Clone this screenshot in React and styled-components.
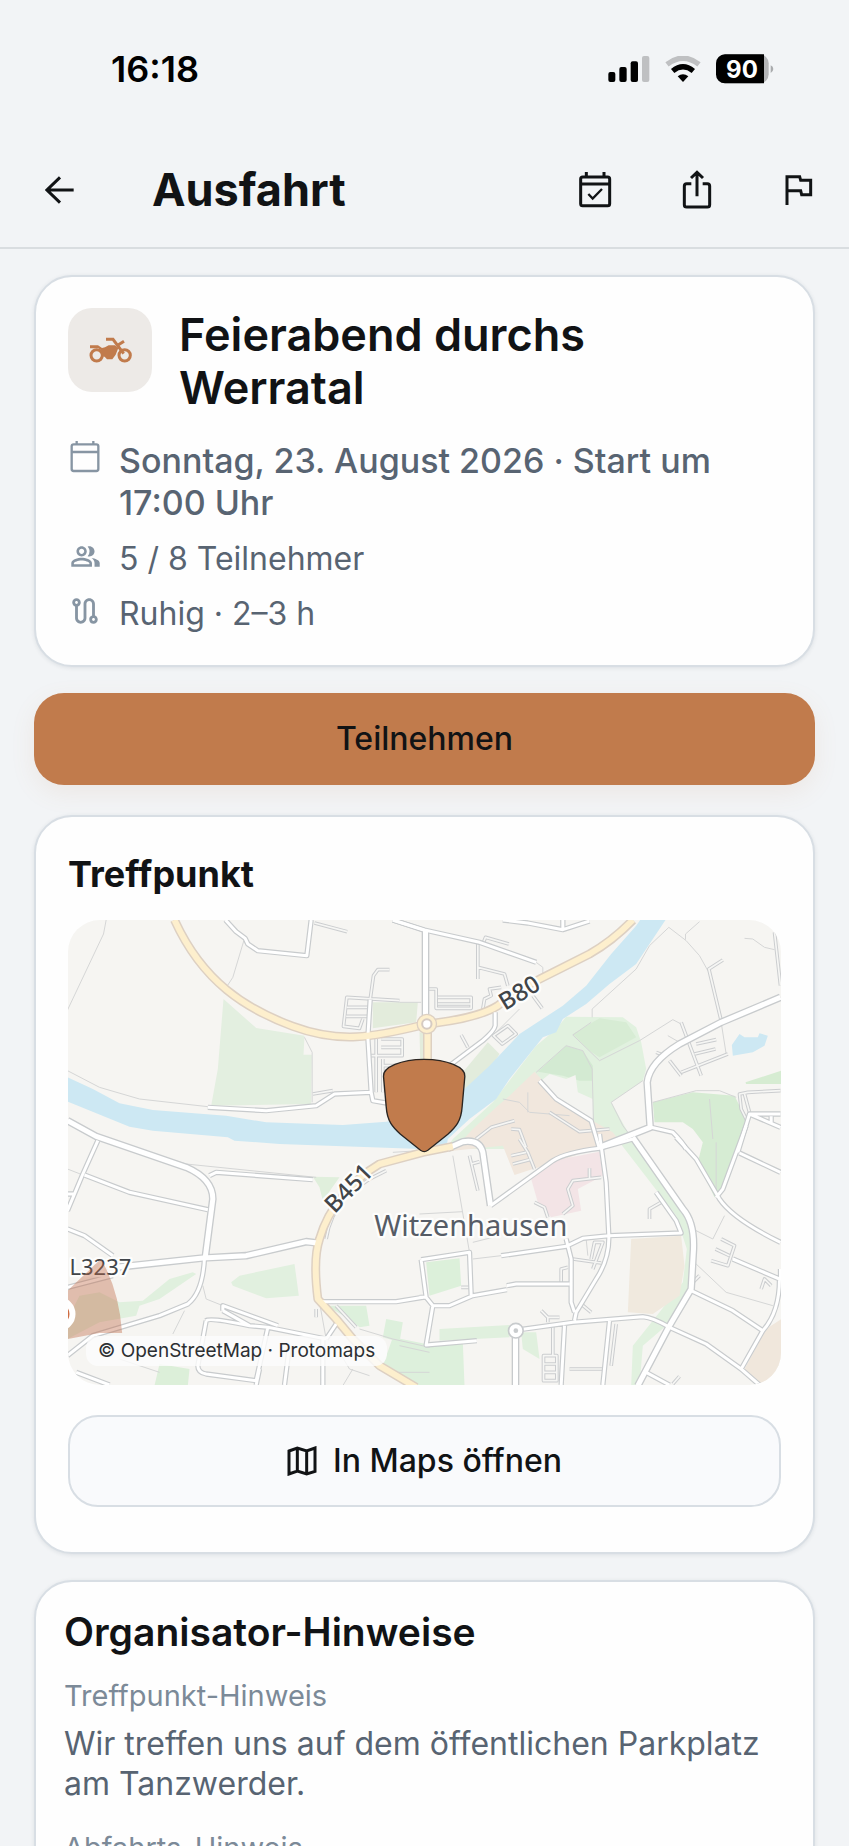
import React from "react";
import styled, { createGlobalStyle } from "styled-components";
import { MdOutlinePeopleAlt, MdOutlineRoute } from "react-icons/md";

const GlobalStyle = createGlobalStyle`
  *, *::before, *::after { box-sizing: border-box; }
  body {
    margin: 0;
    background: #f2f4f6;
    color: #111315;
    font-family: Inter, "Liberation Sans", sans-serif;
  }
  h1, h2, h3, p, ul { margin: 0; padding: 0; }
  button { font: inherit; color: inherit; cursor: pointer; }
  svg { display: block; flex: none; }
`;

/* ---------- Layout ---------- */

const Screen = styled.div`
  display: flex;
  flex-direction: column;
  height: 100vh;
  overflow: hidden;
`;

const StatusBar = styled.div`
  display: flex;
  flex: none;
  align-items: center;
  justify-content: space-between;
  height: 132px;
  padding: 6px 75px 0 111px;
  color: #000;
`;

const Clock = styled.time`
  font-size: 36px;
  font-weight: 600;
  line-height: 40px;
`;

const StatusIcons = styled.div`
  display: flex;
  align-items: center;
  gap: 15px;
`;

const Header = styled.header`
  display: flex;
  flex: none;
  align-items: center;
  height: 117px;
  padding: 0 26px 0 36px;
  border-bottom: 2px solid #d9dde0;
`;

const IconButton = styled.button`
  display: grid;
  place-items: center;
  width: 48px;
  height: 48px;
  padding: 0;
  border: 0;
  background: none;
`;

const PageTitle = styled.h1`
  flex: 1;
  margin-left: 68px;
  font-size: 45px;
  font-weight: 700;
  line-height: 56px;
`;

const Actions = styled.div`
  display: flex;
  gap: 54px;
`;

const Content = styled.main`
  display: flex;
  flex: 1;
  flex-direction: column;
  gap: 26px;
  min-height: 0;
  padding: 26px 34px;
  overflow-y: auto;
  scrollbar-width: none;
`;

const Card = styled.section`
  flex: none;
  padding: ${(p) => p.$pad};
  border: 2px solid #d8dee4;
  border-radius: 38px;
  background: #fefefe;
  box-shadow: 0 1px 4px rgba(30, 50, 70, 0.1);
`;

/* ---------- Ride summary ---------- */

const Summary = styled.div`
  display: flex;
  gap: 27px;
`;

const RideBadge = styled.div`
  display: grid;
  flex: none;
  place-items: center;
  width: 84px;
  height: 84px;
  border-radius: 24px;
  background: #edeae7;
`;

const RideTitle = styled.h2`
  font-size: 45px;
  font-weight: 600;
  line-height: 53px;
`;

const Facts = styled.ul`
  display: flex;
  flex-direction: column;
  gap: 15px;
  margin-top: 26px;
  list-style: none;
`;

const Fact = styled.li`
  display: flex;
  gap: 17px;
  color: #586472;
  font-size: ${(p) => (p.$lead ? 34 : 32)}px;
  font-weight: ${(p) => (p.$lead ? 500 : 400)};
  line-height: ${(p) => (p.$lead ? 42 : 40)}px;
`;

const FactIcon = styled.span`
  display: grid;
  flex: none;
  place-items: center;
  width: 34px;
  height: 34px;
  color: #8795a3;
`;

/* ---------- Buttons ---------- */

const Button = styled.button`
  display: flex;
  flex: none;
  align-items: center;
  justify-content: center;
  gap: 16px;
  width: 100%;
  height: 92px;
  border: 0;
  border-radius: 30px;
  font-size: 32px;
  font-weight: 500;
  line-height: 40px;
`;

const PrimaryButton = styled(Button)`
  margin-bottom: 4px;
  background: #c17b4c;
  box-shadow: 0 8px 24px rgba(193, 123, 76, 0.1);
`;

const OutlineButton = styled(Button)`
  border: 2px solid #d8dee4;
  background: #f9fafc;
`;

/* ---------- Meeting point ---------- */

const MeetingTitle = styled.h2`
  margin-bottom: 22px;
  font-size: 36px;
  font-weight: 700;
  line-height: 48px;
`;

const MapFrame = styled.div`
  position: relative;
  height: 465px;
  margin-bottom: 30px;
  border-radius: 32px;
  background: #f6f5f2;
  overflow: hidden;

  > svg {
    width: 100%;
    height: 100%;
  }
`;

const Attribution = styled.small`
  position: absolute;
  bottom: 19px;
  left: 18px;
  padding: 0 12px;
  border-radius: 12px;
  background: rgba(252, 252, 252, 0.8);
  color: #2c2f32;
  font-size: 19px;
  line-height: 30px;
`;

/* ---------- Notes ---------- */

const NotesTitle = styled.h2`
  margin-bottom: 20px;
  font-size: 39px;
  font-weight: 600;
  line-height: 48px;
`;

const NoteLabel = styled.h3`
  color: #7c8a98;
  font-size: 29px;
  font-weight: 400;
  line-height: 40px;
`;

const NoteText = styled.p`
  margin: 8px 0 24px;
  color: #586472;
  font-size: 32px;
  line-height: 40px;
`;

/* ---------- Icons ---------- */

const Stroke = styled.svg`
  fill: none;
  stroke: currentColor;
  stroke-width: ${(p) => p.$w || 9};
`;

const Signal = () => (
  <svg width="42" height="26" viewBox="0 0 126 78" aria-hidden="true">
    <rect x="1" y="48" width="21" height="30" rx="6" />
    <rect x="34" y="33" width="22" height="45" rx="6" />
    <rect x="68" y="16" width="22" height="62" rx="6" />
    <rect x="102" y="0" width="22" height="78" rx="6" fill="#bfc0c2" />
  </svg>
);

const Wifi = () => (
  <svg width="36" height="26" viewBox="0 0 108 78" aria-hidden="true" fill="none">
    <path d="M6 25Q54-12 102 25" stroke="#bfc0c2" strokeWidth="16" />
    <path d="M23 45Q54 20 85 45" stroke="#000" strokeWidth="16" />
    <path d="M38 61Q54 48 70 61L54 78Z" fill="#000" />
  </svg>
);

const Battery = () => (
  <svg width="58" height="30" viewBox="0 0 174 90" role="img" aria-label="90 %">
    <rect x="0" y="1" width="158" height="87" rx="27" fill="#b4b5b7" />
    <path d="M27 1H144V88H27A27 27 0 0 1 0 61V28A27 27 0 0 1 27 1Z" />
    <path d="M164 34Q172 38 172 45T164 57Z" fill="#a9abad" />
    <text x="78" y="71" textAnchor="middle" fill="#fff" fontSize="72" fontWeight="700">90</text>
  </svg>
);

const BackIcon = () => (
  <Stroke width="30" height="30" viewBox="0 0 90 90" aria-hidden="true">
    <path d="M86 45H8M45 7 6 45 45 83" />
  </Stroke>
);

const EventIcon = () => (
  <Stroke width="36" height="36" viewBox="0 0 108 108" aria-hidden="true">
    <rect x="11" y="15" width="87" height="86" rx="6" />
    <path d="M11 36H98M28 0V15M81 0V15" />
    <path d="M34 66 47 80 75 51" strokeWidth="7" />
  </Stroke>
);

const ShareIcon = () => (
  <Stroke width="30" height="39" viewBox="0 0 90 117" aria-hidden="true">
    <path d="M28 41H14Q7 41 7 48V104Q7 111 14 111H76Q83 111 83 104V48Q83 41 76 41H62M45 79V8M27 24 45 7 63 24" />
  </Stroke>
);

const FlagIcon = () => (
  <Stroke width="28" height="30" viewBox="0 0 84 90" aria-hidden="true">
    <path d="M6 90V5H44L47 16H77V59H50L47 47H6" />
  </Stroke>
);

const CalendarIcon = () => (
  <Stroke $w={7} width="34" height="34" viewBox="0 0 102 102" aria-hidden="true">
    <rect x="11" y="13" width="80" height="80" rx="6" />
    <path d="M11 36H91M26 3V13M76 3V13" />
  </Stroke>
);

const MapIcon = () => (
  <Stroke $w={9} width="30" height="30" viewBox="0 0 90 90" aria-hidden="true">
    <path d="M6 15 31 6 59 15 84 6V76L59 84 31 75 6 84ZM31 6V75M59 15V84" />
  </Stroke>
);

const MotorcycleIcon = () => (
  <svg width="43" height="27" viewBox="0 0 129 81" aria-hidden="true" color="#c17b4c">
    <g fill="none" stroke="currentColor" strokeWidth="9">
      <circle cx="23" cy="55" r="17" />
      <circle cx="107" cy="55" r="17" />
      <path d="M51 7H72L104 50M86 25 105 13" />
    </g>
    <path
      fill="currentColor"
      d="M3 25H27L39 33 48 31 59 25H78L88 33 80 53 70 67H54L47 59H43Q42 42 28 34H3Z"
    />
  </svg>
);

/* ---------- Map data: four tiles, three units per pixel ---------- */

const areas = [
  ["#e3efe0", "492,270 590,357 735,380 732,437 757,437 755,585 455,590 475,480"],
  ["#e3ecdc", "940,280 1075,280 1070,340 940,358"],
  ["#e3ecdc", "1080,370 1095,370 1098,450 1082,450"],
  ["#e2ecdc", "1210,490 1285,400 1320,435 1295,475 1215,545"],
  ["#e1f1df", "1520,323 1690,325 1730,355 1745,400 1760,480 1750,515 1655,580 1700,660 1790,800 1880,930 1900,1020 1890,1140 1820,1250 1750,1310 1740,1430 1715,1430 1720,1310 1800,1210 1870,1120 1882,1020 1850,920 1680,700 1600,640 1500,720 1160,720 1180,690 1300,580 1430,410 1490,360"],
  ["#d3ead2", "1435,488 1520,410 1570,425 1600,470 1600,515 1560,515 1510,500"],
  ["#d7ecd4", "1540,375 1620,328 1700,340 1730,385 1620,445 1590,425"],
  ["#f4f4f1", "1445,515 1470,495 1520,510 1548,498 1555,550 1600,570 1600,640 1500,580"],
  ["#f1e7dd", "1425,488 1450,515 1490,570 1590,630 1660,670 1675,690 1600,720 1490,760 1420,780 1365,798 1330,710 1180,725 1240,660 1310,595 1350,560"],
  ["#d6ecd3", "1780,580 1900,550 2025,560 2065,640 2045,700 1990,845 1965,865 1915,760 1930,700 1900,660 1870,640 1785,640"],
  ["#d6ecd2", "2058,520 2166,485 2166,525 2060,525"],
  ["#f3e4e6", "1415,810 1480,755 1620,728 1630,800 1555,840 1565,905 1475,925 1435,880"],
  ["#f0e9de", "1715,990 1865,980 1875,1070 1860,1160 1780,1215 1705,1210"],
  ["#f0e7dc", "2166,1230 2166,1430 2110,1430 2055,1380 2120,1260"],
  ["#dcf0da", "1100,1060 1200,1048 1205,1130 1110,1160"],
  ["#e0f0de", "1140,1260 1350,1248 1350,1285 1140,1295"],
  ["#ddf0dc", "1000,1285 1100,1305 1210,1300 1215,1430 1050,1430 970,1370"],
  ["#e0f0de", "1385,1270 1430,1270 1440,1350 1390,1320"],
  ["#e1f0df", "515,1120 540,1100 705,1065 718,1160 620,1168 520,1130"],
  ["#e0f0de", "60,1160 120,1150 180,1180 250,1175 330,1110 400,1090 410,1095 300,1170 240,1190 230,1220 120,1240 24,1290 24,1230"],
  ["#e0efdc", "760,803 840,805 790,875 780,835"],
  ["#ddf0dc", "800,1190 920,1190 930,1250 900,1255 870,1230"],
  ["#ddf0dc", "980,1230 1030,1240 1020,1300 970,1285"],
  ["#dcefd9", "300,1365 390,1380 385,1430 285,1430"],
];

const waters = [
  "24,505 100,540 180,583 280,603 500,620 620,640 850,648 980,638 1120,610 1215,540 1290,470 1380,375 1510,290 1580,230 1655,135 1730,50 1742,33 1818,33 1780,90 1730,165 1650,225 1580,285 1510,330 1490,370 1450,385 1350,510 1310,570 1230,630 1165,690 1160,720 1085,720 850,712 660,705 525,695 505,685 280,665 210,653 24,578",
  "2017,408 2040,375 2055,385 2095,385 2100,373 2125,380 2115,410 2080,430 2020,440",
];

const tiles = [
  {
    x: 0,
    y: 0,
    paths:
      "M140 33 132 75 24 303M553 95 520 205 505 228M24 485 120 535 240 570 445 593M735 385 758 430V580M1085 280H1020",
    lanes:
      "M765 42 863 68M990 182H955L942 200 932 272M1020 275 862 265 852 352 900 358 910 330M862 295H928M860 322H925M935 440H1028V390H965M965 415H1028M950 390V550M970 470H1028M970 450V550M760 555 820 545",
    streets:
      "M498 33 530 68 557 88 565 105 595 125 742 140 755 33M445 595 620 605 770 590 825 555 935 550M932 272 925 385 935 550 940 575 980 582M1000 33 1098 65",
    mains: "",
    trunks: "M345 33C430 220 560 300 700 352S940 385 1090 348",
  },
  {
    x: 1080,
    y: 0,
    paths:
      "M350 160 370 175V208M518 325V300L650 180 690 110 748 55 800 95 840 140 865 185M840 38 798 75V92M975 88 1000 90 1035 115 1065 122M905 340 920 435M460 378 515 340M460 378 540 455 660 395 760 332 785 345M350 490 440 410 490 425 518 480 522 640M670 515 575 580 610 650 640 690M700 580 830 545H900L950 565M870 570 880 690M300 300 230 370M745 380 780 400M250 570 300 580 330 610 450 620M325 550V610",
    lanes:
      "M175 105V210M175 175 255 195 265 230M190 105 198 85 268 105M25 240H50V298H155V265H55M55 285H155M190 300 195 270 215 260 210 240 245 235M340 260 368 298M222 380 265 350 290 375 248 405ZM125 378 145 415M910 153 868 180 905 335M1065 70 1083 230M785 340 845 500M785 490 925 435M750 455 785 500M830 405 890 392M825 435 888 420M710 430 735 440M390 610 480 668 570 660M170 690 215 655 285 635M275 660 300 662 320 715M1083 545 985 550 960 555 965 600 985 640M975 555 990 610",
    streets:
      "M250 33 325 42 430 62 510 36M430 62V33M-80 33 15 63 180 100 350 160M360 515 410 570 515 635 540 720M695 655 760 670Q790 700 800 720M1083 615H990L955 730M990 615 1083 655M1055 622V645M227 310V350Q225 365 190 395L90 470",
    mains: "M18 65V320M1083 265 905 340 780 405Q690 460 683 520L692 655 540 715",
    trunks:
      "M48 342Q180 325 235 290 300 240 365 208L510 135Q580 95 640 33M24 370V460",
  },
  {
    x: 0,
    y: 690,
    paths:
      "M430 440 440 480 490 500M375 515 340 585M780 490 800 600M900 570 1000 600 1110 625M24 90 70 108M120-5 380 75 770 115M180 660 300 700M840 640 870 690 930 710M880 690 850 740M1000 40 1080 35M1020 620 1110 640M1000 700 1110 700",
    lanes:
      "M980 95 930 120 860 170Q810 230 800 300M830 500 890 565M770 510V535",
    streets:
      "M115 5 70 105 24 215M75 108 210 160 445 212M24 165H45M450 110 470 100 760 122M24 270 75 290 160 350M435 357Q430 460 385 495L300 530 100 590 24 650M24 445 160 410M790 488H1010L1090 475M490 515V500L655 560M490 515 570 560 625 565 800 600M440 545Q450 535 570 560M440 545 415 680Q415 700 440 705L590 725 625 565M800 600 830 555M790 600V738M690 620 675 738M600 690 590 738M50 700 150 738",
    mains:
      "M24-55 110-8 380 85Q460 120 460 180L437 357M170 385 430 357 560 350 740 308 775 312",
    trunks:
      "M1180 22 1090 40 960 75Q900 110 850 170 800 230 780 300 760 360 775 480L830 540 880 600 960 680 1070 745",
  },
  {
    x: 1080,
    y: 690,
    paths:
      "M100 50 150 340M820 270 880 300 915 230M830 375 920 460 1060 500M160 360 245 350M500 300 505 350M0 225 130 218M160 310 240 290M890 10V160M540 545 640 530",
    lanes:
      "M150 50 175 155M155 75 180 68M510 88V120M430 225 460 200 445 150 460 125 545 115M345 190 375 205 385 235M300 0 325 40 345 90M275 50 320 40M280 75 330 62M725 190 690 210V240M905 300 945 320 925 380 875 365M888 330 930 350M1025 450 1035 420 1055 440M820 430 840 410M425 430V390L445 385M520 390 550 310 525 310 515 360M460 360 545 372M485 495 515 520M365 515 385 535V550M385 535H420M372 650H412V725H372ZM372 675H412M372 700H412M400 560V650M590 555 575 680M550 690 450 690M760 735 780 712M125 445H150",
    streets:
      "M213 200 400 65Q440 40 540 28L640 0M540-15 560 130 568 290Q570 360 530 420L470 520 465 545M770-5 830 60 900 180Q940 240 1083 310M980-40 910 150 890 175M960 42 1083 100M245 350 440 322 490 298 568 290 785 282 770 245 710 160M5 362 150 340 155 468M5 362 20 475 40 500 20 618 172 605M0 475H20M40 500H90L160 470 262 452M262 440 290 435H450M440 300 455 360V490L465 520M300 572 460 550 670 533Q700 535 750 565L860 615 965 690 1020 738M435 560 425 738M570 545 550 738M815 455 940 515 1030 575 965 690M1030 575Q1080 520 1080 420L940 360M1083 390V420M680 700 750 738",
    mains:
      "M85 28 130 8Q180 0 190 40L213 200M640-5 790 210Q825 250 822 330L815 450 750 560 655 740M288 595V745",
    trunks: "",
  },
];

const layers = [
  ["paths", "#d5d6d6", 3],
  ["lanes", "#cbcdcf", 11],
  ["lanes", "#f6f6f4", 5],
  ["streets", "#c8cbcd", 16],
  ["mains", "#c8cbcd", 23],
  ["trunks", "#ddd0c2", 27],
  ["streets", "#ffffff", 9],
  ["mains", "#ffffff", 15],
  ["trunks", "#fdefcd", 18],
];

const MapLabel = styled.text`
  fill: ${(p) => p.$color || "#414549"};
  stroke: #fdfdfc;
  stroke-width: 14px;
  stroke-linejoin: round;
  paint-order: stroke;
  font-family: "Noto Sans", sans-serif;
  font-size: ${(p) => p.$size || 72}px;
  font-weight: ${(p) => p.$weight || 400};
  text-anchor: ${(p) => p.$anchor || "middle"};
`;

const TownMap = () => (
  <svg
    viewBox="24 33 2142 1395"
    preserveAspectRatio="xMidYMid slice"
    role="img"
    aria-label="Karte von Witzenhausen"
  >
    {areas.map(([fill, points]) => (
      <polygon key={points} fill={fill} points={points} />
    ))}
    {waters.map((points) => (
      <polygon key={points} fill="#cde8f3" points={points} />
    ))}
    {layers.map(([kind, color, width], i) => (
      <g key={i} fill="none" stroke={color} strokeWidth={width} strokeLinejoin="round">
        {tiles.map((t, j) => (
          <path key={j} d={t[kind]} transform={`translate(${t.x} ${t.y})`} />
        ))}
      </g>
    ))}
    <circle cx="1102" cy="345" r="29" fill="#fdefcd" stroke="#ddd0c2" strokeWidth="4" />
    <circle cx="1102" cy="345" r="14" fill="#fff" stroke="#d6cbc2" strokeWidth="6" />
    <circle cx="1369" cy="1265" r="22" fill="#fff" stroke="#c8cbcd" strokeWidth="5" />
    <circle cx="1369" cy="1265" r="7" fill="#c8cbcd" />
    <MapLabel x="1380" y="276" $weight={500} transform="rotate(-31 1380 252)">B80</MapLabel>
    <MapLabel x="868" y="862" $weight={500} transform="rotate(-46 868 838)">B451</MapLabel>
    <MapLabel x="1234" y="980" $size={87} $color="#565c66">Witzenhausen</MapLabel>
    <MapLabel x="30" y="1097" $size={66} $anchor="start">L3237</MapLabel>
    <path d="M24 1145 124 1050Q178 1140 188 1272H120L24 1290Z" fill="#c06a45" fillOpacity="0.4" />
    <circle cx="-3" cy="1215" r="42" fill="#cf6d43" stroke="#fff" strokeWidth="18" />
    <path
      d="M972 502C970 475 1025 451 1094 451S1218 475 1216 502L1208 592C1205 638 1188 655 1165 676L1105 724Q1094 732 1083 724L1023 676C1000 655 983 638 980 592Z"
      fill="#c17b4c"
      stroke="#2a2522"
      strokeWidth="4"
    />
  </svg>
);

/* ---------- Screen ---------- */

export default function App() {
  return (
    <Screen>
      <GlobalStyle />
      <StatusBar>
        <Clock>16:18</Clock>
        <StatusIcons>
          <Signal />
          <Wifi />
          <Battery />
        </StatusIcons>
      </StatusBar>
      <Header>
        <IconButton type="button" aria-label="Zurück">
          <BackIcon />
        </IconButton>
        <PageTitle>Ausfahrt</PageTitle>
        <Actions>
          <IconButton type="button" aria-label="Im Kalender speichern">
            <EventIcon />
          </IconButton>
          <IconButton type="button" aria-label="Teilen">
            <ShareIcon />
          </IconButton>
          <IconButton type="button" aria-label="Melden">
            <FlagIcon />
          </IconButton>
        </Actions>
      </Header>
      <Content>
        <Card $pad="31px 32px">
          <Summary>
            <RideBadge>
              <MotorcycleIcon />
            </RideBadge>
            <RideTitle>Feierabend durchs Werratal</RideTitle>
          </Summary>
          <Facts>
            <Fact $lead>
              <FactIcon>
                <CalendarIcon />
              </FactIcon>
              Sonntag, 23. August 2026 · Start um 17:00 Uhr
            </Fact>
            <Fact>
              <FactIcon>
                <MdOutlinePeopleAlt size={31} />
              </FactIcon>
              5 / 8 Teilnehmer
            </Fact>
            <Fact>
              <FactIcon>
                <MdOutlineRoute size={34} />
              </FactIcon>
              Ruhig · 2–3 h
            </Fact>
          </Facts>
        </Card>
        <PrimaryButton type="button">Teilnehmen</PrimaryButton>
        <Card $pad="33px 32px 45px">
          <MeetingTitle>Treffpunkt</MeetingTitle>
          <MapFrame>
            <TownMap />
            <Attribution>© OpenStreetMap · Protomaps</Attribution>
          </MapFrame>
          <OutlineButton type="button">
            <MapIcon />
            In Maps öffnen
          </OutlineButton>
        </Card>
        <Card $pad="26px 28px">
          <NotesTitle>Organisator-Hinweise</NotesTitle>
          <NoteLabel>Treffpunkt-Hinweis</NoteLabel>
          <NoteText>Wir treffen uns auf dem öffentlichen Parkplatz am Tanzwerder.</NoteText>
          <NoteLabel>Abfahrts-Hinweis</NoteLabel>
        </Card>
      </Content>
    </Screen>
  );
}
